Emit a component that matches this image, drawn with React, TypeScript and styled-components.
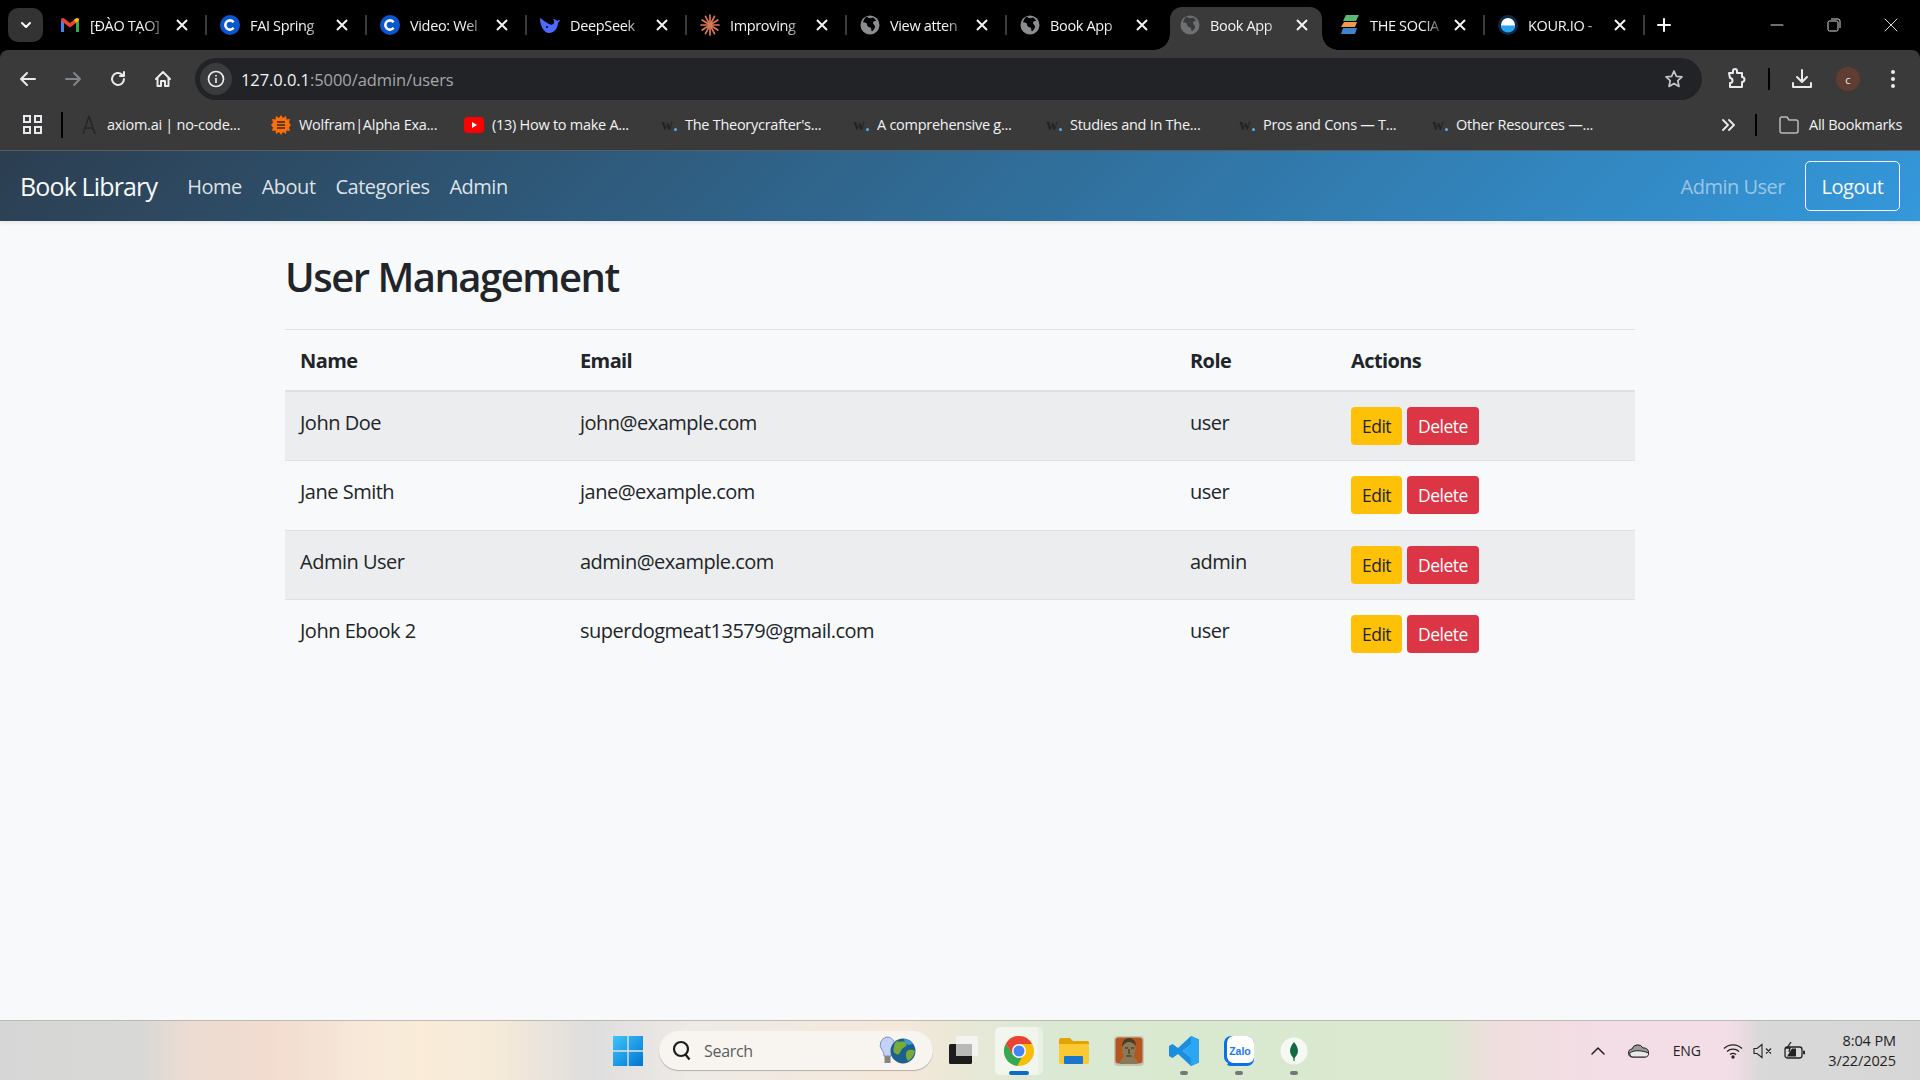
import React from "react";
import styled, { createGlobalStyle } from "styled-components";

const UI = `"Open Sans", "Noto Sans", sans-serif`;

const Global = createGlobalStyle`
  html, body { margin: 0; padding: 0; height: 100%; overflow: hidden; }
  body { font-family: ${UI}; background: #000; }
  * { box-sizing: border-box; }
  svg { flex: none; }
`;

const Page = styled.div`
  display: flex;
  flex-direction: column;
  width: 1920px;
  height: 1080px;
  overflow: hidden;
  background: #000;
`;

/* ---------- Chrome tab strip ---------- */
const TabStrip = styled.div`
  display: flex;
  align-items: flex-start;
  height: 50px;
  background: #000;
  flex: none;
`;
const TabSearch = styled.div`
  width: 35px;
  height: 34px;
  margin: 8px 3px 0 8px;
  border-radius: 10px;
  background: #333;
  display: flex;
  align-items: center;
  justify-content: center;
  flex: none;
`;
const Tab = styled.div<{ $active?: boolean; $sep?: boolean; $narrow?: boolean }>`
  position: relative;
  width: ${(p) => (p.$narrow ? 158 : 160)}px;
  height: 43px;
  margin-top: 7px;
  padding: 0 17px 7px 14px;
  display: flex;
  align-items: center;
  flex: none;
  ${(p) =>
    p.$sep
      ? `&::after { content: ""; position: absolute; right: -1px; top: 8px; width: 2px; height: 20px; background: #3b3b3b; }`
      : ""}
  ${(p) =>
    p.$active
      ? `&::before { content: ""; position: absolute; left: 4px; right: 4px; top: 0; bottom: 0; border-radius: 12px 12px 0 0; background: #3a3a3a; }
         &::after { content: ""; position: absolute; left: -12px; right: -12px; bottom: 0; height: 16px;
          background:
            radial-gradient(circle at 0 0, transparent 15.5px, #3a3a3a 16px) left bottom / 16px 16px no-repeat,
            radial-gradient(circle at 100% 0, transparent 15.5px, #3a3a3a 16px) right bottom / 16px 16px no-repeat; }`
      : ""}
`;
const Favicon = styled.span`
  width: 20px;
  height: 20px;
  flex: none;
  margin-right: 10px;
  display: flex;
  align-items: center;
  justify-content: center;
  position: relative;
  z-index: 1;
`;
const TabTitle = styled.span`
  flex: 1;
  min-width: 0;
  overflow: hidden;
  white-space: nowrap;
  color: #f1f3f4;
  font-size: 14.5px;
  letter-spacing: -0.35px;
  -webkit-mask-image: linear-gradient(90deg, #000 76%, rgba(0, 0, 0, 0.25) 100%);
  mask-image: linear-gradient(90deg, #000 76%, rgba(0, 0, 0, 0.25) 100%);
  position: relative;
  z-index: 1;
`;
const TabClose = styled.span`
  width: 14px;
  height: 14px;
  margin-left: 12px;
  flex: none;
  display: flex;
  position: relative;
  z-index: 1;
`;
const NewTab = styled.div`
  width: 24px;
  height: 43px;
  margin: 7px 0 0 8px;
  padding-bottom: 7px;
  display: flex;
  align-items: center;
  justify-content: center;
`;
const WinControls = styled.div`
  margin-left: auto;
  display: flex;
  align-items: center;
  height: 50px;
  gap: 43px;
  padding-right: 22px;
`;

/* ---------- Toolbar ---------- */
const Toolbar = styled.div`
  height: 50px;
  flex: none;
  background: #3a3a3a;
  border-radius: 8px 8px 0 0;
  display: flex;
  align-items: center;
  padding: 8px 0 0 5px;
`;
const ToolSlot = styled.div<{ $w: number; $pl?: number }>`
  width: ${(p) => p.$w}px;
  padding-left: ${(p) => p.$pl ?? 0}px;
  height: 42px;
  display: flex;
  align-items: center;
  justify-content: center;
  flex: none;
`;
const Omnibox = styled.div`
  width: 1507px;
  height: 42px;
  margin-left: 10px;
  border-radius: 21px;
  background: #222327;
  display: flex;
  align-items: center;
  padding: 0 18px 0 5px;
  flex: none;
`;
const InfoChip = styled.div`
  width: 32px;
  height: 32px;
  border-radius: 50%;
  background: #3a3b3d;
  display: flex;
  align-items: center;
  justify-content: center;
  margin-right: 9px;
`;
const UrlText = styled.div`
  color: #a5a7aa;
  font-size: 16.5px;
  letter-spacing: -0.07px;
  flex: 1;
  b { font-weight: 400; color: #f1f3f4; }
`;
const Divider = styled.span<{ $h?: number }>`
  width: 2px;
  height: ${(p) => p.$h ?? 20}px;
  background: #000;
  display: block;
  flex: none;
`;
const Avatar = styled.div`
  width: 24px;
  height: 24px;
  border-radius: 50%;
  background: #5f3d33;
  color: #f1e9e6;
  font-size: 11px;
  display: flex;
  align-items: center;
  justify-content: center;
`;

/* ---------- Bookmarks ---------- */
const BookmarkBar = styled.div`
  height: 50px;
  flex: none;
  background: #3a3a3a;
  display: flex;
  align-items: center;
  padding: 0 0 1px 23px;
`;
const BookmarkItem = styled.div<{ $w: number; $pad?: number; $gap?: number }>`
  width: ${(p) => p.$w}px;
  padding-left: ${(p) => p.$pad ?? 0}px;
  display: flex;
  align-items: center;
  flex: none;
  gap: ${(p) => p.$gap ?? 8}px;
`;
const BookmarkIcon = styled.span`
  width: 20px;
  height: 20px;
  flex: none;
  display: flex;
  align-items: center;
  justify-content: center;
`;
const WGlyph = styled.span`
  font-family: "Liberation Serif", serif;
  font-weight: 700;
  font-size: 16px;
  color: #222;
  position: relative;
  &::after {
    content: "";
    position: absolute;
    right: -4px;
    bottom: 3px;
    width: 3px;
    height: 3px;
    border-radius: 50%;
    background: #4fb3e8;
  }
`;
const BookmarkText = styled.span`
  color: #f1f3f4;
  font-size: 14.5px;
  letter-spacing: -0.27px;
  white-space: nowrap;
`;

/* ---------- Site navbar ---------- */
const Navbar = styled.nav`
  position: relative;
  z-index: 1;
  height: 71px;
  flex: none;
  border-top: 1px solid #5a5e62;
  background: linear-gradient(135deg, #2c3e50 0%, #3498db 100%);
  display: flex;
  align-items: center;
  padding: 0 20px;
  box-shadow: 0 2px 4px rgba(0, 0, 0, 0.08);
`;
const Brand = styled.div`
  color: #f8f9fa;
  font-size: 25px;
  letter-spacing: -0.85px;
  margin-right: 30px;
`;
const NavLinks = styled.div`
  display: flex;
  gap: 20px;
`;
const NavLink = styled.div`
  color: rgba(255, 255, 255, 0.85);
  font-size: 20px;
  letter-spacing: -0.5px;
`;
const NavUser = styled.div`
  margin-left: auto;
  color: rgba(255, 255, 255, 0.5);
  font-size: 20px;
  letter-spacing: -0.5px;
  margin-right: 20px;
`;
const LogoutButton = styled.button`
  width: 95px;
  height: 50px;
  background: transparent;
  border: 1px solid #f8f9fa;
  border-radius: 5px;
  color: #f8f9fa;
  font-family: ${UI};
  font-size: 20px;
  letter-spacing: -0.5px;
  padding: 0;
`;

/* ---------- Content ---------- */
const Main = styled.main`
  flex: 1;
  background: #f8f9fa;
  padding: 32px 285px 0;
  min-height: 0;
`;
const Heading = styled.h2`
  margin: 0 0 17px;
  font-size: 40px;
  line-height: 48px;
  font-weight: 600;
  color: #212529;
  letter-spacing: -1.5px;
  height: 59px;
`;
const Table = styled.table`
  width: 1350px;
  border-collapse: collapse;
  table-layout: fixed;
  color: #212529;
  font-size: 20px;
  letter-spacing: -0.5px;
`;
const Th = styled.th<{ $w: number }>`
  width: ${(p) => p.$w}px;
  text-align: left;
  font-weight: 700;
  padding: 2px 15px 0;
  height: 61px;
  border-top: 1px solid #dee2e6;
  border-bottom: 2px solid #dfe0e4;
  letter-spacing: -0.6px;
`;
const Td = styled.td`
  padding: 15px;
  height: 69px;
  vertical-align: top;
  line-height: 32px;
`;
const Row = styled.tr<{ $striped?: boolean; $last?: boolean; $tall?: boolean }>`
  background: ${(p) => (p.$striped ? "#ecedee" : "transparent")};
  border-bottom: ${(p) => (p.$last ? "0" : "1px solid #dee2e6")};
  ${(p) => (p.$tall ? `${Td} { height: 70px; }` : "")}
`;
const Actions = styled.div`
  display: flex;
  gap: 5px;
`;
const ActionButton = styled.button<{ $danger?: boolean }>`
  height: 38px;
  width: ${(p) => (p.$danger ? 72 : 51)}px;
  border: 0;
  border-radius: 4px;
  padding: 0;
  background: ${(p) => (p.$danger ? "#dc3545" : "#ffc107")};
  color: ${(p) => (p.$danger ? "#fff" : "#212529")};
  font-family: ${UI};
  font-size: 17.5px;
  letter-spacing: -0.5px;
`;

/* ---------- Taskbar ---------- */
const Taskbar = styled.div`
  height: 60px;
  flex: none;
  border-top: 1px solid #bdb9b4;
  background: linear-gradient(
    90deg,
    #d6d6d6 0,
    #d8d8d6 140px,
    #ecdcd2 190px,
    #f2dcd0 270px,
    #f6e7d8 350px,
    #faecd9 420px,
    #f5ead9 500px,
    #dedede 590px,
    #eeeae6 690px,
    #f5e8da 900px,
    #dbe9d4 1040px,
    #d9e9cf 1200px,
    #dae9d0 1440px,
    #efdedd 1495px,
    #f3dde6 1600px,
    #f3dde6 1730px,
    #d9d9d9 1760px,
    #d6d6d6 1920px
  );
  display: flex;
  align-items: center;
  padding-left: 613px;
`;
const TaskCenter = styled.div`
  display: flex;
  align-items: center;
`;
const SearchPill = styled.div`
  width: 274px;
  height: 39px;
  margin: 0 0 0 16px;
  border-radius: 20px;
  background: #f8f5f1;
  box-shadow: 0 1px 1px rgba(0, 0, 0, 0.25);
  display: flex;
  align-items: center;
  padding: 0 17px 0 13px;
  color: #5c5c5c;
  font-size: 16px;
  letter-spacing: -0.3px;
  gap: 12px;
`;
const SearchSpacer = styled.span`
  flex: 1;
`;
const TaskSlot = styled.div<{ $active?: boolean; $dot?: boolean }>`
  position: relative;
  width: 48px;
  height: 48px;
  margin-left: 7px;
  border-radius: 5px;
  display: flex;
  align-items: center;
  justify-content: center;
  flex: none;
  ${(p) =>
    p.$active
      ? `background: linear-gradient(90deg, rgba(255,255,255,.58) 0 43px, rgba(255,255,255,.35) 43px);
         &::after { content: ""; position: absolute; left: 14px; bottom: 0; width: 20px; height: 4px; border-radius: 2px; background: #0a6cc9; }`
      : ""}
  ${(p) =>
    p.$dot
      ? `&::after { content: ""; position: absolute; left: 20px; bottom: 0; width: 8px; height: 4px; border-radius: 2px; background: #777; }`
      : ""}
`;
const Tray = styled.div`
  margin-left: auto;
  display: flex;
  align-items: center;
  padding-right: 24px;
  color: #1f1f1f;
`;
const TraySlot = styled.div<{ $w: number }>`
  width: ${(p) => p.$w}px;
  display: flex;
  align-items: center;
  justify-content: center;
  flex: none;
`;
const TrayLang = styled.span`
  font-size: 14px;
  letter-spacing: -0.2px;
`;
const Clock = styled.div`
  margin-left: 9px;
  text-align: right;
  font-size: 14.5px;
  line-height: 20px;
  letter-spacing: -0.1px;
`;

/* ---------- Icons ---------- */
const X = ({ c = "#f1f3f4" }: { c?: string }) => (
  <svg width="14" height="14" viewBox="0 0 14 14">
    <path d="M2 2l10 10M12 2L2 12" stroke={c} strokeWidth="2" />
  </svg>
);
const Gmail = () => (
  <svg width="20" height="16" viewBox="0 0 20 16">
    <path d="M1 15V3l3 2v10z" fill="#4285f4" />
    <path d="M16 15V5l3-2v12z" fill="#34a853" />
    <path d="M1 3.5C1 1 3 .6 4.5 1.7L10 6l5.5-4.3C17 .6 19 1 19 3.5L16 6l-6 4.5L4 6z" fill="#ea4335" />
    <path d="M16 5.8l3-2.3C19 1 17 .6 15.5 1.7L14 2.9z" fill="#fbbc04" />
  </svg>
);
const CFav = () => (
  <svg width="20" height="20" viewBox="0 0 20 20">
    <circle cx="10" cy="10" r="10" fill="#0a56d0" />
    <path d="M13.6 7.2A4.6 4.6 0 1 0 13.6 12.8" fill="none" stroke="#fff" strokeWidth="2.6" />
  </svg>
);
const Whale = () => (
  <svg width="22" height="20" viewBox="0 0 22 20">
    <path d="M1 3c2 1 5 4 9 6 2 1 4 1 5-1 .5-1 0-3-1-4 2 0 3 1 4 2 1-1 2-1 3-1-.5 1-1 2-2 3 0 5-4 10-9 10C5 18 1 11 1 3z" fill="#4d6bfe" />
    <circle cx="8" cy="12" r="1" fill="#000" />
  </svg>
);
const Spark = () => (
  <svg width="20" height="22" viewBox="0 0 20 22">
    <g stroke="#d97757" strokeWidth="1.7" strokeLinecap="round">
      {Array.from({ length: 12 }).map((_, i) => {
        const a = (i * Math.PI) / 6;
        return <line key={i} x1={10} y1={11} x2={10 + 9 * Math.cos(a)} y2={11 + 10 * Math.sin(a)} />;
      })}
    </g>
  </svg>
);
const Globe = ({ c = "#8b8d91", bg = "#000" }: { c?: string; bg?: string }) => (
  <svg width="20" height="20" viewBox="0 0 20 20">
    <circle cx="10" cy="10" r="9.5" fill={c} />
    <path d="M7 1.5c1 2 4 2 6 1 2 1.500 3 2.500 3 3.500-2 0-3 .5-3 2s2 2 2 4-2 3-3 4.500c-1-1-.5-3-1.500-4-1.500 0-3.500-1-3.500-3s-2-2-4-2C3.500 5 5 2.500 7 1.500z" fill={bg} />
  </svg>
);
const Stack = () => (
  <svg width="20" height="22" viewBox="0 0 20 22">
    <path d="M6 1h13l-3 6H3z" fill="#5bb974" />
    <path d="M4 8h13l-2 5H1z" fill="#f2994a" />
    <path d="M3 14h14l-2 6H1z" fill="#3d85c6" />
  </svg>
);
const Kour = () => (
  <svg width="20" height="20" viewBox="0 0 20 20">
    <circle cx="10" cy="10" r="10" fill="#0b2a4a" />
    <circle cx="10" cy="10" r="7" fill="#fff" />
    <path d="M3 10.500h14a7 7 0 0 1-14 0z" fill="#2aa3ef" />
  </svg>
);
const Line = ({ d, w = 22, h = 22, s = "#e8eaed", sw = 2 }: { d: string; w?: number; h?: number; s?: string; sw?: number }) => (
  <svg width={w} height={h} viewBox={`0 0 ${w} ${h}`} fill="none" stroke={s} strokeWidth={sw} strokeLinejoin="round" strokeLinecap="round">
    <path d={d} />
  </svg>
);

const tabs: { t: string; i: React.ReactNode; a?: boolean; s?: boolean; n?: boolean }[] = [
  { t: "[ĐÀO TẠO]", i: <Gmail />, s: true },
  { t: "FAI Spring", i: <CFav />, s: true },
  { t: "Video: Wel", i: <CFav />, s: true },
  { t: "DeepSeek", i: <Whale />, s: true },
  { t: "Improving", i: <Spark />, s: true },
  { t: "View atten", i: <Globe />, s: true },
  { t: "Book App", i: <Globe /> },
  { t: "Book App", i: <Globe c="#6e7073" bg="#3a3a3a" />, a: true },
  { t: "THE SOCIA", i: <Stack />, s: true, n: true },
  { t: "KOUR.IO -", i: <Kour />, s: true },
];

const bookmarks: { t: string; i: React.ReactNode; w: number }[] = [
  {
    t: "axiom.ai | no-code...",
    w: 192,
    i: (
      <svg width="16" height="20" viewBox="0 0 16 20">
        <path d="M8 1L2 19M8 1l6 18M4 13h8" stroke="#262626" strokeWidth="1.6" fill="none" />
      </svg>
    ),
  },
  {
    t: "Wolfram|Alpha Exa...",
    w: 193,
    i: (
      <svg width="20" height="20" viewBox="0 0 20 20">
        <path d="M10 0l2 3 3-2 .5 3.500L19 4l-1 3.500 2 2.500-2 2.500 1 3.500-3.500-.5L15 19l-3-2-2 3-2-3-3 2-.5-3.500L1 16l1-3.500L0 10l2-2.500L1 4l3.500.5L5 1l3 2z" fill="#f96f0b" />
        <path d="M6 7h8M6 10h8M6 13h8" stroke="#3a2a1a" strokeWidth="1.400" />
      </svg>
    ),
  },
  {
    t: "(13) How to make A...",
    w: 193,
    i: (
      <svg width="20" height="16" viewBox="0 0 20 16">
        <rect width="20" height="16" rx="4" fill="#f00" />
        <path d="M8 5l5 3-5 3z" fill="#fff" />
      </svg>
    ),
  },
  { t: "The Theorycrafter's...", w: 192, i: <WGlyph>w</WGlyph> },
  { t: "A comprehensive g...", w: 193, i: <WGlyph>w</WGlyph> },
  { t: "Studies and In The...", w: 193, i: <WGlyph>w</WGlyph> },
  { t: "Pros and Cons — T...", w: 193, i: <WGlyph>w</WGlyph> },
  { t: "Other Resources —...", w: 293, i: <WGlyph>w</WGlyph> },
];

const users = [
  { n: "John Doe", e: "john@example.com", r: "user" },
  { n: "Jane Smith", e: "jane@example.com", r: "user" },
  { n: "Admin User", e: "admin@example.com", r: "admin" },
  { n: "John Ebook 2", e: "superdogmeat13579@gmail.com", r: "user" },
];

export default function App() {
  return (
    <Page>
      <Global />
      <TabStrip>
        <TabSearch>
          <Line w={12} h={8} sw={2} d="M2 2l4 4 4-4" s="#fff" />
        </TabSearch>
        {tabs.map((t, i) => (
          <Tab key={i} $active={t.a} $sep={t.s} $narrow={t.n}>
            <Favicon>{t.i}</Favicon>
            <TabTitle>{t.t}</TabTitle>
            <TabClose><X /></TabClose>
          </Tab>
        ))}
        <NewTab>
          <Line w={14} h={14} d="M7 1v12M1 7h12" s="#fff" />
        </NewTab>
        <WinControls>
          <Line w={14} h={14} sw={1} d="M1 7h12" s="#ddd" />
          <svg width="14" height="14" viewBox="0 0 14 14" fill="none" stroke="#ddd">
            <rect x="1" y="3" width="10" height="10" rx="1.5" />
            <path d="M4 1h7a2 2 0 0 1 2 2v7" />
          </svg>
          <Line w={14} h={14} sw={1} d="M1 1l12 12M13 1L1 13" s="#ddd" />
        </WinControls>
      </TabStrip>

      <Toolbar>
        <ToolSlot $w={45}>
          <Line w={18} h={18} d="M16 9H2M8 3L2 9l6 6" />
        </ToolSlot>
        <ToolSlot $w={45}>
          <Line w={18} h={18} d="M2 9h14M10 3l6 6-6 6" s="#80868b" />
        </ToolSlot>
        <ToolSlot $w={45}>
          <Line w={18} h={18} d="M15 9a6 6 0 1 1-2-4.500M15 2v4h-4" />
        </ToolSlot>
        <ToolSlot $w={45}>
          <Line w={18} h={18} d="M2 9l7-7 7 7M3.500 8v8H7v-5h4v5h3.500V8" />
        </ToolSlot>
        <Omnibox>
          <InfoChip>
            <svg width="18" height="18" viewBox="0 0 18 18" fill="none" stroke="#e8eaed" strokeWidth="1.700">
              <circle cx="9" cy="9" r="7.500" />
              <path d="M9 8v5M9 5v1.500" />
            </svg>
          </InfoChip>
          <UrlText><b>127.0.0.1</b>:5000/admin/users</UrlText>
          <Line w={20} h={20} s="#c4c7c5" sw={1.7} d="M10 2l2.400 5.300 5.600.6-4.200 3.800 1.200 5.700-5-2.900-5 2.900 1.200-5.700L2 7.900l5.600-.6z" />
        </Omnibox>
        <ToolSlot $w={66} $pl={4}>
          <Line w={22} h={22} d="M3 5h4V3a2 2 0 0 1 4 0v2h5v4a2 2 0 0 1 0 5v5H4v-4a2.500 2.500 0 0 0 0-5z" />
        </ToolSlot>
        <Divider $h={22} />
        <ToolSlot $w={64}>
          <Line w={22} h={22} d="M11 2v12M6 9l5 5 5-5M2 15v4h18v-4" />
        </ToolSlot>
        <ToolSlot $w={28}>
          <Avatar>c</Avatar>
        </ToolSlot>
        <ToolSlot $w={62}>
          <svg width="6" height="20" viewBox="0 0 6 20" fill="#e8eaed">
            <circle cx="3" cy="3" r="2" />
            <circle cx="3" cy="10" r="2" />
            <circle cx="3" cy="17" r="2" />
          </svg>
        </ToolSlot>
      </Toolbar>

      <BookmarkBar>
        <BookmarkItem $w={38}>
          <svg width="19" height="19" viewBox="0 0 19 19" fill="none" stroke="#e8eaed" strokeWidth="2">
            <rect x="1" y="1" width="6" height="6" />
            <rect x="12" y="1" width="6" height="6" />
            <rect x="1" y="12" width="6" height="6" />
            <rect x="12" y="12" width="6" height="6" />
          </svg>
        </BookmarkItem>
        <Divider $h={26} />
        <BookmarkItem $w={16} />
        {bookmarks.map((b) => (
          <BookmarkItem key={b.t} $w={b.w}>
            <BookmarkIcon>{b.i}</BookmarkIcon>
            <BookmarkText>{b.t}</BookmarkText>
          </BookmarkItem>
        ))}
        <BookmarkItem $w={34}>
          <Line w={14} h={12} d="M2 1l5 5-5 5M8 1l5 5-5 5" s="#e8eaed" sw={1.800} />
        </BookmarkItem>
        <Divider $h={22} />
        <BookmarkItem $w={150} $pad={22} $gap={10}>
          <Line w={20} h={18} s="#b9b9b9" sw={1.500} d="M1 3a2 2 0 0 1 2-2h5l2 3h7a2 2 0 0 1 2 2v9a2 2 0 0 1-2 2H3a2 2 0 0 1-2-2z" />
          <BookmarkText>All Bookmarks</BookmarkText>
        </BookmarkItem>
      </BookmarkBar>

      <Navbar>
        <Brand>Book Library</Brand>
        <NavLinks>
          <NavLink>Home</NavLink>
          <NavLink>About</NavLink>
          <NavLink>Categories</NavLink>
          <NavLink>Admin</NavLink>
        </NavLinks>
        <NavUser>Admin User</NavUser>
        <LogoutButton>Logout</LogoutButton>
      </Navbar>

      <Main>
        <Heading>User Management</Heading>
        <Table>
          <thead>
            <tr>
              <Th $w={280}>Name</Th>
              <Th $w={610}>Email</Th>
              <Th $w={161}>Role</Th>
              <Th $w={299}>Actions</Th>
            </tr>
          </thead>
          <tbody>
            {users.map((u, i) => (
              <Row key={u.e} $striped={i % 2 === 0} $last={i === users.length - 1} $tall={i === 1}>
                <Td>{u.n}</Td>
                <Td>{u.e}</Td>
                <Td>{u.r}</Td>
                <Td>
                  <Actions>
                    <ActionButton>Edit</ActionButton>
                    <ActionButton $danger>Delete</ActionButton>
                  </Actions>
                </Td>
              </Row>
            ))}
          </tbody>
        </Table>
      </Main>

      <Taskbar>
        <TaskCenter>
          <svg width="30" height="30" viewBox="0 0 30 30">
            <defs>
              <linearGradient id="win" x1="0" y1="0" x2="1" y2="1">
                <stop offset="0" stopColor="#3fc5f7" />
                <stop offset="1" stopColor="#0074d3" />
              </linearGradient>
            </defs>
            <path d="M0 0h14.300v14.300H0zM15.700 0H30v14.300H15.700zM0 15.700h14.300V30H0zM15.700 15.700H30V30H15.700z" fill="url(#win)" />
          </svg>
          <SearchPill>
            <svg width="20" height="22" viewBox="0 0 20 22" fill="none" stroke="#1c1c1c" strokeWidth="2.200">
              <circle cx="9" cy="9" r="7" />
              <path d="M13.500 14.500l4 5" />
            </svg>
            Search
            <SearchSpacer />
            <svg width="38" height="30" viewBox="0 0 38 30">
              <path d="M9 1a8 8 0 0 1 6 13c-1 1-2 3-2 6H6c0-3-1-5-2-6A8 8 0 0 1 9 1z" fill="#c3d2f5" stroke="#7f90cf" />
              <rect x="6.500" y="20" width="6" height="7" fill="#85857f" />
              <circle cx="25" cy="15" r="12.500" fill="#1d5f8f" />
              <path d="M19 5c3 2 7-1 9 2s-2 4-4 6-2 7-6 5c-3-2-3-4-2-7 0-3 1-5 3-6zM29 15c3-2 6-1 8 0-1 4-3 8-7 10-2-3-3-7-1-10z" fill="#79ab3a" />
              <path d="M26 3c4 0 7 2 9 5l-5 1c-2-1-4-3-4-6z" fill="#3f9ad6" />
            </svg>
          </SearchPill>
          <TaskSlot>
            <svg width="30" height="30" viewBox="0 0 30 30">
              <rect x="0" y="8" width="23" height="20" rx="1.500" fill="#1c1c1c" />
              <rect x="7" y="0" width="22" height="20" rx="1.500" fill="#f4f4f2" opacity=".9" />
              <rect x="7" y="8" width="16" height="12" fill="#b9b9b8" />
            </svg>
          </TaskSlot>
          <TaskSlot $active>
            <svg width="30" height="30" viewBox="0 0 30 30">
              <circle cx="15" cy="15" r="15" fill="#fbbc04" />
              <path d="M15 0A15 15 0 0 0 2 7.500L8.500 18.800 15 8h13a15 15 0 0 0-13-8z" fill="#ea4335" />
              <path d="M2 7.500A15 15 0 0 0 13 29.900L19.500 18.800 8.500 18.800z" fill="#34a853" />
              <circle cx="15" cy="15" r="7" fill="#fff" />
              <circle cx="15" cy="15" r="5.500" fill="#4285f4" />
            </svg>
          </TaskSlot>
          <TaskSlot>
            <svg width="30" height="26" viewBox="0 0 30 26">
              <path d="M0 2a2 2 0 0 1 2-2h9l3 3h14a2 2 0 0 1 2 2v5H0z" fill="#e2a400" />
              <path d="M0 6h30v18a2 2 0 0 1-2 2H2a2 2 0 0 1-2-2z" fill="#fcc934" />
              <rect x="5" y="18" width="19" height="8" rx="1" fill="#1a78c9" />
            </svg>
          </TaskSlot>
          <TaskSlot>
            <svg width="30" height="30" viewBox="0 0 30 30">
              <rect x="0" y="0" width="30" height="30" rx="4" fill="#c7c3b6" />
              <rect x="1.500" y="1.500" width="27" height="26" rx="3" fill="#b4561f" />
              <path d="M6 28c0-4 2-6 4-7-1.500-3-2-6-1.500-10 0-5 2.500-8 6.500-8s6.500 3 6.500 8c0 4-.5 7-2 10 2 1 4 3 4 7z" fill="#8a7a58" />
              <path d="M8 11c0-6 3-9 7-9s7 3 7 8c-2-2-4-4-7-4s-5 2-7 5z" fill="#4f3b26" />
              <path d="M11 12h3M17 12h3M15 13v5M12.500 20h5" stroke="#2f2415" strokeWidth="1" />
            </svg>
          </TaskSlot>
          <TaskSlot $dot>
            <svg width="30" height="30" viewBox="0 0 30 30">
              <path fillRule="evenodd" d="M22 0l8 3.500v23L22 30 9 18 3.500 22 0 20V10l3.500-2L9 12zM22 8.500L14 15l8 6.500z" fill="#1a8fe0" />
              <path fillRule="evenodd" d="M22 0l8 3.500v23L22 30V21.500L14 15l8-6.500z" fill="#2aa6f2" />
            </svg>
          </TaskSlot>
          <TaskSlot $dot>
            <svg width="30" height="30" viewBox="0 0 30 30">
              <path d="M7 0h16a7 7 0 0 1 7 7v16a7 7 0 0 1-7 7H6l-3-1 1-2a7 7 0 0 1-4-6V7a7 7 0 0 1 7-7z" fill="#0f6fe8" />
              <path d="M9 0h14a7 7 0 0 1 7 7v14a6 6 0 0 1-6 6H9a7 7 0 0 1-6-7V7a7 7 0 0 1 6-7z" fill="#fff" />
              <text x="16" y="18.500" textAnchor="middle" fontFamily="Liberation Sans" fontWeight="700" fontSize="10.500" fill="#1a78f0">Zalo</text>
            </svg>
          </TaskSlot>
          <TaskSlot $dot>
            <svg width="28" height="28" viewBox="0 0 28 28">
              <circle cx="14" cy="14" r="13.500" fill="#f6f8f4" />
              <path d="M14 5c2.500 3 4 6 4 9 0 3.500-2.500 5.500-3.300 7l-.2 3h-1l-.2-3c-.8-1.500-3.300-3.500-3.300-7 0-3 1.500-6 4-9z" fill="#0f6a42" />
            </svg>
          </TaskSlot>
        </TaskCenter>
        <Tray>
          <TraySlot $w={34}>
            <Line w={16} h={10} s="#222" sw={1.500} d="M2 8l6-6 6 6" />
          </TraySlot>
          <TraySlot $w={47}>
            <svg width="22" height="14" viewBox="0 0 22 14">
              <path d="M5 13a4 4 0 0 1-1-8 6 6 0 0 1 11-1 4.500 4.500 0 0 1 2 9z" fill="#999" stroke="#222" strokeWidth="1" />
              <path d="M1.500 9c4-3 12-3 19 0 .5 2-1 4-3 4H5c-2 0-3-2-3.500-4z" fill="#e9e9e9" stroke="#222" strokeWidth="1" />
            </svg>
          </TraySlot>
          <TraySlot $w={49}><TrayLang>ENG</TrayLang></TraySlot>
          <TraySlot $w={44}>
            <svg width="20" height="16" viewBox="0 0 20 16" fill="none" stroke="#222" strokeWidth="1.300">
              <path d="M1 5.500a13 13 0 0 1 18 0M4 8.500a9 9 0 0 1 12 0M7 11.500a5 5 0 0 1 6 0" />
              <circle cx="10" cy="14" r="1" fill="#222" />
            </svg>
          </TraySlot>
          <TraySlot $w={16}>
            <svg width="20" height="16" viewBox="0 0 20 16" fill="none" stroke="#222" strokeWidth="1.100">
              <path d="M1 5.500h3l5-4v13l-5-4H1zM13 5.500l5 5M18 5.500l-5 5" />
            </svg>
          </TraySlot>
          <TraySlot $w={48}>
            <svg width="22" height="18" viewBox="0 0 22 18">
              <rect x="1" y="5" width="17" height="11" rx="2.500" fill="none" stroke="#222" strokeWidth="1.300" />
              <rect x="19" y="8.500" width="2" height="4" rx="1" fill="#222" />
              <path d="M3 14.500l5-8h4v8z" fill="#222" />
              <path d="M7 0L3 6h3l-1 4" fill="none" stroke="#222" strokeWidth="1.300" />
            </svg>
          </TraySlot>
          <Clock>
            8:04 PM
            <br />
            3/22/2025
          </Clock>
        </Tray>
      </Taskbar>
    </Page>
  );
}
